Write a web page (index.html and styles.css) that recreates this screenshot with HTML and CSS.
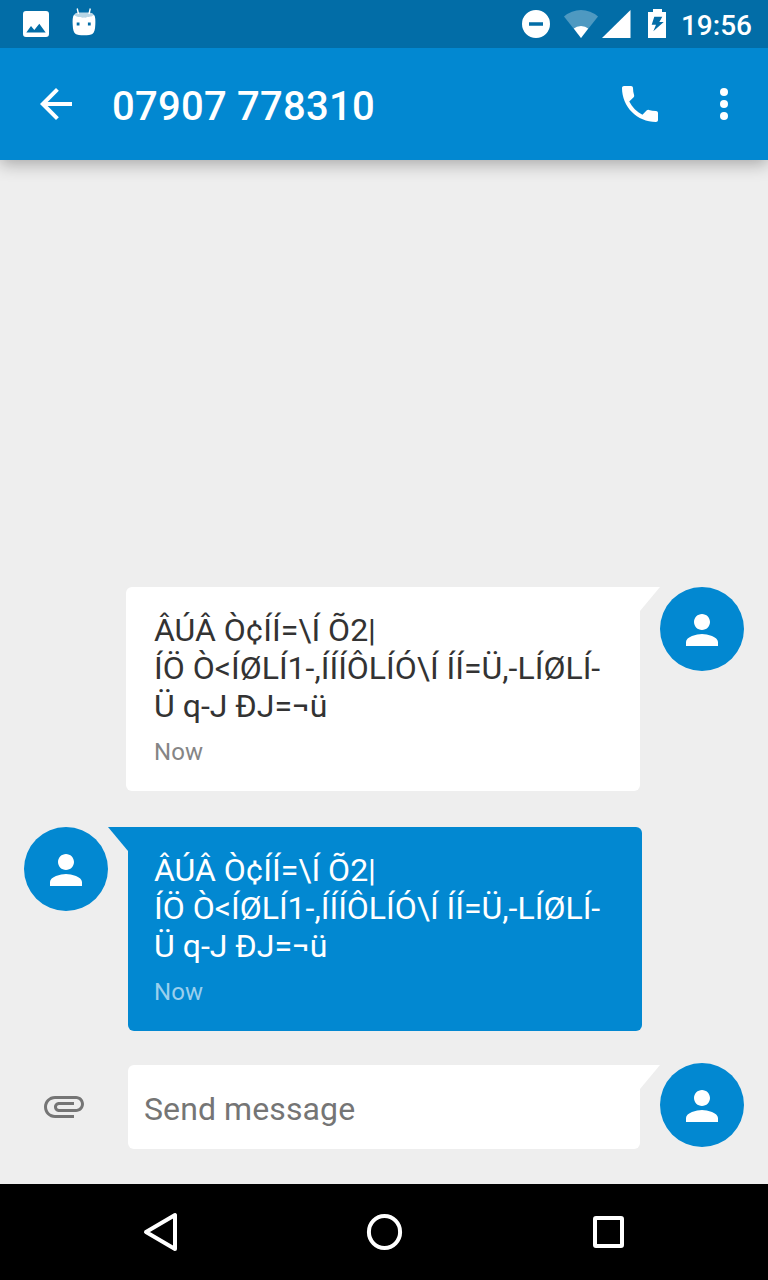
FILE: index.html
```html
<!DOCTYPE html>
<html lang="en">
<head>
<meta charset="utf-8">
<title>Messages</title>
<link rel="stylesheet" href="styles.css">
</head>
<body>
<svg width="0" height="0" class="defs"><symbol id="person" viewBox="0 0 24 24"><path d="M12 12c2.21 0 4-1.79 4-4s-1.79-4-4-4-4 1.79-4 4 1.79 4 4 4zm0 2c-2.67 0-8 1.34-8 4v2h16v-2c0-2.66-5.33-4-8-4z"/></symbol></svg>
<div class="screen">
  <div class="status">
    <div class="notifications">
      <svg width="26" height="26" viewBox="0 0 26 26"><path fill-rule="evenodd" d="M3 0h20a3 3 0 0 1 3 3v20a3 3 0 0 1-3 3H3a3 3 0 0 1-3-3V3a3 3 0 0 1 3-3zM3.3 21.500h19.400L16.300 12.800l-5 6.300L8 15z"/></svg>
      <svg width="24" height="28" viewBox="0 0 24 28"><path d="M5.200.5l1.300 5.500M18.300.5L17 6" stroke="#fff" stroke-width="1.400"/><path opacity=".72" d="M2 7.500C3 4 7 4.500 12 4.500S21 4 22 7.500C20 10 4 10 2 7.500z"/><path fill-rule="evenodd" d="M2 6.800c2 3.300 18 3.300 20 0 1.500 2 1.500 6 1.300 10-.2 5-1 8-3 9.200-2 1.700-14.600 1.700-16.600 0-2-1.200-2.800-4.200-3-9.200C.5 12.800.5 8.800 2 6.800zM4.700 14.600h2.800v2.800H4.700zM15.900 14.600h2.800v2.800h-2.800z"/></svg>
    </div>
    <div class="system">
      <svg width="28" height="28" viewBox="0 0 28 28"><path fill-rule="evenodd" d="M14 0a14 14 0 1 1 0 28 14 14 0 0 1 0-28zM7 12.300v3.400h14v-3.400z"/></svg>
      <svg class="wifi" width="34" height="28" viewBox="0 0 34 28"><path opacity=".3" d="M0 6.500Q7.500 0 17 0t17 6.500L17 28z"/><path d="M9.800 18.500Q12.500 16 17 16t7.200 2.500L17 28z"/></svg>
      <svg class="signal" width="29" height="28" viewBox="0 0 29 28"><path d="M28.500 0v28H0z"/></svg>
      <svg class="battery" width="18" height="29" viewBox="0 0 18 29"><path fill-rule="evenodd" d="M5 0h9v3h4v26H0V3h5zM6.300 7.700L3.700 15.700H8L5.300 22.300 15.700 13h-4.400l3-5.300z"/></svg>
      <span class="clock">19:56</span>
    </div>
  </div>
  <header class="appbar">
    <svg class="icon" viewBox="0 0 24 24"><path d="M20 11H7.830l5.590-5.590L12 4l-8 8 8 8 1.410-1.410L7.830 13H20v-2z"/></svg>
    <h1 class="title">07907 778310</h1>
    <svg class="icon" viewBox="0 0 24 24"><path d="M6.620 10.790c1.440 2.830 3.760 5.140 6.590 6.590l2.200-2.200c.270-.270.670-.360 1.020-.240 1.120.370 2.330.570 3.570.570.550 0 1 .450 1 1V20c0 .550-.450 1-1 1-9.390 0-17-7.610-17-17 0-.550.450-1 1-1h3.500c.550 0 1 .450 1 1 0 1.250.200 2.450.570 3.570.110.350.030.740-.250 1.020l-2.200 2.200z"/></svg>
    <svg class="icon menu" viewBox="0 0 24 24"><circle cx="12" cy="6" r="2"/><circle cx="12" cy="12" r="2"/><circle cx="12" cy="18" r="2"/></svg>
  </header>
  <main class="thread">
    <div class="row sent">
      <div class="bubble">
        <p class="text">ÂÚÂ Ò¢ÍÍ=\Í Õ2|<br>ÍÖ Ò&lt;ÍØLÍ1-,ÍÍÍÔLÍÓ\Í ÍÍ=Ü,-LÍØLÍ-<br>Ü q-J ÐJ=¬ü</p>
        <p class="time">Now</p>
      </div>
      <svg class="tail" viewBox="0 0 20 24"><path d="M0 0h20L0 24z"/></svg>
      <div class="avatar"><svg class="icon"><use href="#person"/></svg></div>
    </div>
    <div class="row received">
      <div class="avatar"><svg class="icon"><use href="#person"/></svg></div>
      <svg class="tail" viewBox="0 0 20 24"><path d="M0 0h20v24z"/></svg>
      <div class="bubble">
        <p class="text">ÂÚÂ Ò¢ÍÍ=\Í Õ2|<br>ÍÖ Ò&lt;ÍØLÍ1-,ÍÍÍÔLÍÓ\Í ÍÍ=Ü,-LÍØLÍ-<br>Ü q-J ÐJ=¬ü</p>
        <p class="time">Now</p>
      </div>
    </div>
    <div class="compose">
      <svg class="icon attach" viewBox="0 0 24 24"><path d="M7.500 18C4.460 18 2 15.540 2 12.500S4.460 7 7.500 7H18c2.210 0 4 1.790 4 4s-1.790 4-4 4H9.500C8.120 15 7 13.880 7 12.500S8.120 10 9.500 10H17v1.500H9.500c-.550 0-1 .450-1 1s.450 1 1 1H18c1.380 0 2.500-1.120 2.500-2.500S19.380 8.500 18 8.500H7.500c-2.210 0-4 1.790-4 4s1.790 4 4 4H17V18H7.500z"/></svg>
      <div class="field">Send message</div>
      <svg class="tail" viewBox="0 0 20 24"><path d="M0 0h20L0 24z"/></svg>
      <div class="avatar"><svg class="icon"><use href="#person"/></svg></div>
    </div>
  </main>
  <nav class="navbar">
    <svg viewBox="0 0 48 48"><path d="M10 24L39 7v34z"/></svg>
    <svg viewBox="0 0 48 48"><ellipse cx="24.500" cy="24" rx="15.600" ry="16"/></svg>
    <svg viewBox="0 0 48 48"><rect x="11" y="10" width="27" height="28" rx="1"/></svg>
  </nav>
</div>
</body>
</html>
```

FILE: styles.css
```css
* { box-sizing: border-box; }
body { margin: 0; font-family: Roboto, "Noto Sans", sans-serif; background: #eee; }
.defs { position: absolute; }
svg { display: block; flex: none; fill: #fff; }
p, h1 { margin: 0; }

.screen { width: 768px; height: 1280px; display: flex; flex-direction: column; overflow: hidden; }

.status {
  height: 48px;
  flex: none;
  background: #026da7;
  display: flex;
  justify-content: space-between;
  padding: 0 16px 0 23px;
  z-index: 2;
}
.notifications, .system { display: flex; align-items: flex-start; }
.notifications { gap: 23px; padding-top: 8px; }
.notifications svg:first-child { margin-top: 3px; }
.system { padding-top: 10px; }
.wifi { margin-left: 14px; }
.signal { margin-left: 4px; }
.battery { margin: -1px 15px 0 17px; }
.clock { color: #fff; font-size: 28px; font-weight: 500; line-height: 32px; }

.appbar {
  height: 112px;
  flex: none;
  background: #0288d1;
  display: flex;
  align-items: center;
  padding: 0 20px 0 32px;
  box-shadow: 0 4px 16px rgba(0, 0, 0, .3);
  z-index: 1;
}
.icon { width: 48px; height: 48px; }
.title { flex: 1; margin: 6px 0 0 32px; color: #fff; font-size: 40px; font-weight: 500; line-height: 48px; letter-spacing: .25px; }
.menu { margin-left: 36px; }

.thread { flex: 1; display: flex; flex-direction: column; justify-content: flex-end; padding-bottom: 35px; }
.row { display: flex; align-items: flex-start; margin-bottom: 36px; padding: 0 24px; }
.sent { justify-content: flex-end; }
.bubble { width: 514px; height: 204px; border-radius: 6px; padding: 24px 0 0 28px; }
.sent .bubble { background: #fff; border-top-right-radius: 0; color: #333; }
.received .bubble { background: #0288d1; border-top-left-radius: 0; color: #fff; padding-left: 26px; }
.text { font-size: 32px; line-height: 38px; white-space: nowrap; }
.time { margin-top: 13px; font-size: 24px; line-height: 28px; color: #858585; letter-spacing: .1px; }
.received .time { color: #9acfed; }
.tail { width: 20px; height: 24px; }
.received .tail { fill: #0288d1; }
.avatar {
  width: 84px;
  height: 84px;
  flex: none;
  border-radius: 50%;
  background: #0288d1;
  display: flex;
  align-items: center;
  justify-content: center;
  padding-top: 1px;
}

.compose { display: flex; align-items: flex-start; padding: 0 24px 0 40px; margin-top: -2px; }
.attach { fill: #757575; margin: 17px 40px 0 0; }
.field {
  width: 512px;
  height: 84px;
  border-radius: 6px 0 6px 6px;
  background: #fff;
  padding: 2px 0 0 16px;
  color: #757575;
  font-size: 32px;
  line-height: 84px;
  letter-spacing: .1px;
}
.compose .avatar { margin-top: -2px; }

.navbar {
  height: 96px;
  flex: none;
  background: #000;
  display: flex;
  justify-content: center;
  align-items: center;
  gap: 176px;
}
.navbar svg { width: 48px; height: 48px; fill: none; stroke: #fff; stroke-width: 4; stroke-linejoin: round; }
```
